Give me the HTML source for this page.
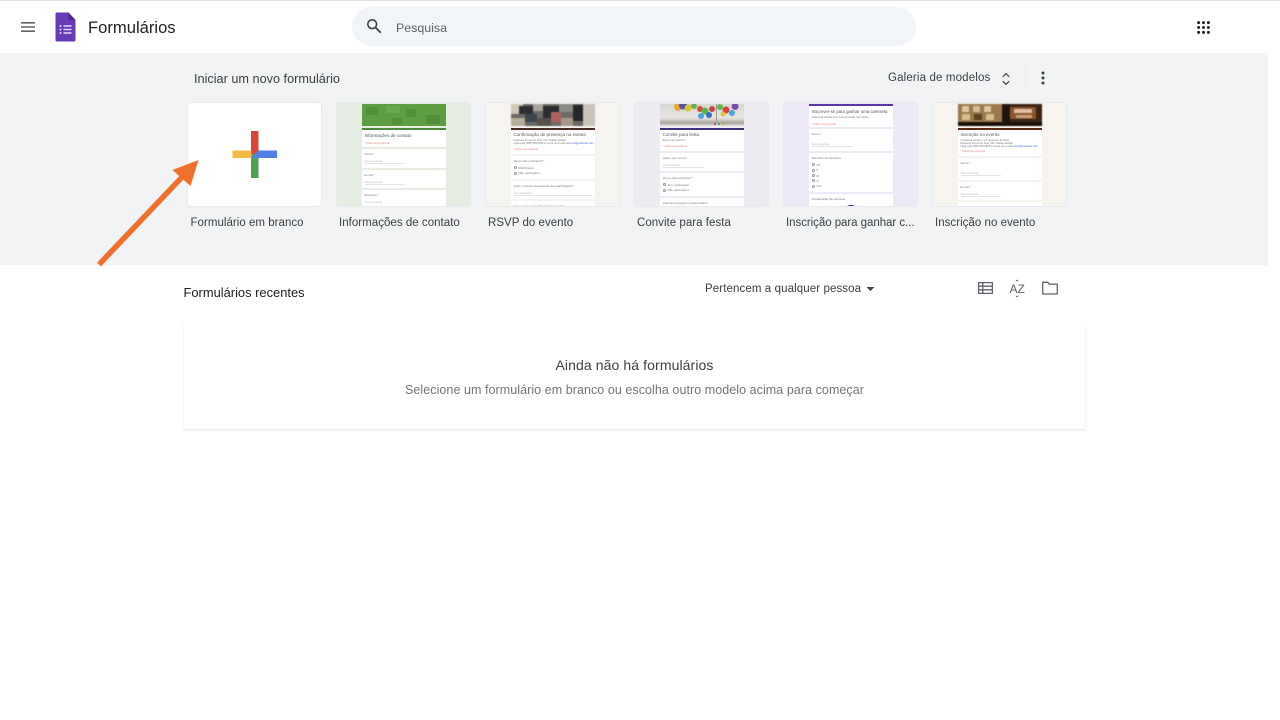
<!DOCTYPE html>
<html lang="pt"><head><meta charset="utf-8"><title>Formulários</title>
<style>
html,body{margin:0;padding:0;background:#fff;width:1280px;height:720px;overflow:hidden;font-family:"Liberation Sans",sans-serif;color:#202124}
body{filter:blur(.3px)}
div,span,svg{position:absolute;box-sizing:border-box}
.t{white-space:nowrap;line-height:16px}
.card{top:102px;width:135px;height:105px;border-radius:4px;border:1px solid #e8eaec;overflow:hidden}
.in{top:0;width:84px;left:24.5px;height:105px;filter:blur(.3px)}
.w{left:0;width:84px;background:#fff}
.x{white-space:nowrap;font-size:3px;line-height:4px;color:#777}
.h{font-size:5px;line-height:6px;color:#555;white-space:nowrap}
.r{font-size:2.5px;line-height:3px;color:#e0807c;white-space:nowrap}
.c{width:3px;height:3px;border:.4px solid #999;border-radius:50%;left:3px}
.l{left:3px;width:40px;height:.5px;background:#e4e4e4}
.lbl{top:215px;font-size:11.5px;color:#3c4043;letter-spacing:.03px}
</style></head><body>
<div style="left:0;top:0;width:1280px;height:1px;background:#dfe1e4"></div>

<svg style="left:21px;top:22px" width="14" height="10" viewBox="0 0 14 10"><path d="M0 .8h14M0 5h14M0 9.200h14" stroke="#5f6368" stroke-width="1.600" fill="none"/></svg>
<svg style="left:55px;top:12px" width="21" height="30" viewBox="0 0 21 30"><path d="M2 .5h11.500l7 7.500v20a1.500 1.500 0 0 1-1.500 1.500H2A1.500 1.500 0 0 1 .5 28V2A1.500 1.500 0 0 1 2 .5z" fill="#673ab7"/><path d="M13.500.5l7 7.500h-5.500a1.500 1.500 0 0 1-1.500-1.500z" fill="#4b2a8f"/><path d="M8.500 14h8M8.500 17.500h8M8.500 21h8" stroke="#e6dcf5" stroke-width="1.500"/><circle cx="5.500" cy="14" r="1" fill="#e6dcf5"/><circle cx="5.500" cy="17.500" r="1" fill="#e6dcf5"/><circle cx="5.500" cy="21" r="1" fill="#e6dcf5"/></svg>
<div class="t" style="left:88px;top:18px;font-size:16.600px;line-height:20px;color:#202124">Formulários</div>

<div style="left:352px;top:7px;width:564px;height:39px;border-radius:20px;background:#f1f4f8"></div>
<svg style="left:366px;top:18px" width="16" height="16" viewBox="0 0 16 16"><circle cx="6.200" cy="6.200" r="4.400" stroke="#3c4043" stroke-width="1.600" fill="none"/><path d="M9.500 9.500l5.300 5.300" stroke="#3c4043" stroke-width="1.800"/></svg>
<div class="t" style="left:396px;top:20px;font-size:12.400px;color:#5f6368">Pesquisa</div>

<svg style="left:1197px;top:21px" width="13" height="13" viewBox="0 0 13 13" fill="#202124"><circle cx="1.600" cy="1.600" r="1.500"/><circle cx="6.500" cy="1.600" r="1.500"/><circle cx="11.400" cy="1.600" r="1.500"/><circle cx="1.600" cy="6.500" r="1.500"/><circle cx="6.500" cy="6.500" r="1.500"/><circle cx="11.400" cy="6.500" r="1.500"/><circle cx="1.600" cy="11.400" r="1.500"/><circle cx="6.500" cy="11.400" r="1.500"/><circle cx="11.400" cy="11.400" r="1.500"/></svg>

<div style="left:0;top:53px;width:1268px;height:212px;background:#f1f3f4"></div>
<div class="t" style="left:194px;top:71px;font-size:12.700px;color:#3c4043">Iniciar um novo formulário</div>
<div class="t" style="left:888px;top:70px;font-size:11.500px;color:#3c4043;letter-spacing:.15px">Galeria de modelos</div>
<svg style="left:1001px;top:72px" width="10" height="14" viewBox="0 0 10 14"><path d="M1.800 4.800L5 1.600l3.200 3.200M1.800 9.200L5 12.400l3.200-3.200" stroke="#3c4043" stroke-width="1.200" fill="none"/></svg>
<div style="left:1025px;top:65px;width:1px;height:27px;background:#e8eaed"></div>
<svg style="left:1041px;top:71px" width="4" height="14" viewBox="0 0 4 14" fill="#3c4043"><circle cx="2" cy="2" r="1.500"/><circle cx="2" cy="7" r="1.500"/><circle cx="2" cy="12" r="1.500"/></svg>

<!-- card 1 -->
<div class="card" style="left:187px;background:#fff"></div>
<svg style="left:232px;top:131px" width="46" height="47" viewBox="0 0 46 47"><rect x="19" y="0" width="7.500" height="24" fill="#db4437"/><rect x="19" y="23" width="7.500" height="24" fill="#4ea14f"/><rect x="0.500" y="19.500" width="19" height="7.500" fill="#f4b942"/><path d="M19 27l7.500-7.500H45V27z" fill="#4f80e8"/></svg>

<!-- card 2 -->
<div class="card" style="left:336px;background:#e6eee3"><div class="in">
<div class="w" style="top:1px;height:22px;background:#5c9e41"></div>
<div style="left:4px;top:4px;width:12px;height:8px;background:#538f3a"></div><div style="left:24px;top:3px;width:14px;height:7px;background:#68a84f"></div><div style="left:44px;top:6px;width:10px;height:8px;background:#538f3a"></div><div style="left:64px;top:12px;width:14px;height:9px;background:#538f3a"></div><div style="left:30px;top:15px;width:10px;height:7px;background:#538f3a"></div>
<div class="w" style="top:25px;height:2px;background:#4f8a38"></div>
<div class="w" style="top:27px;height:17px"><span class="h" style="left:3px;top:3px;font-size:4.500px">Informações de contato</span><span class="r" style="left:3px;top:12px">* Indica uma pergunta</span></div>
<div class="w" style="top:46px;height:18.500px"><span class="x" style="left:3px;top:3px">Nome *</span><span class="x" style="left:3px;top:10px;color:#bbb">Sua resposta</span><span class="l" style="top:14px"></span></div>
<div class="w" style="top:67px;height:18px"><span class="x" style="left:3px;top:3px">E-mail *</span><span class="x" style="left:3px;top:10px;color:#bbb">Sua resposta</span><span class="l" style="top:14px"></span></div>
<div class="w" style="top:87px;height:18px"><span class="x" style="left:3px;top:3px">Endereço *</span><span class="x" style="left:3px;top:10px;color:#bbb">Sua resposta</span></div>
</div></div>

<!-- card 3 -->
<div class="card" style="left:485px;background:#f6f4f1"><div class="in">
<svg style="left:0;top:1px;filter:blur(.6px)" width="84" height="22" viewBox="0 0 84 22"><rect width="84" height="22" fill="#6d6a66"/><rect x="0" y="0" width="12" height="10" fill="#cfc8ba"/><rect x="8" y="2" width="14" height="8" fill="#2d2e31"/><rect x="22" y="0" width="10" height="7" fill="#a9a59c"/><rect x="32" y="2" width="16" height="12" fill="#2b2d31"/><rect x="48" y="0" width="14" height="8" fill="#8c8a86"/><rect x="62" y="1" width="10" height="16" fill="#26272a"/><rect x="72" y="0" width="12" height="22" fill="#c9c4ba"/><rect x="40" y="8" width="10" height="10" fill="#b0605c"/><rect x="14" y="10" width="12" height="8" fill="#3a4650"/><rect x="0" y="14" width="14" height="8" fill="#b8ac9a"/><rect x="26" y="14" width="14" height="8" fill="#56504a"/><rect x="50" y="14" width="12" height="8" fill="#a89888"/></svg>
<div class="w" style="top:25px;height:2px;background:#4a2a28"></div>
<div class="w" style="top:27px;height:23.500px"><span class="h" style="left:3px;top:2px;font-size:4.500px">Confirmação de presença no evento</span><span class="x" style="left:3px;top:9px;font-size:2.500px">Endereço do evento: Rua, 123, Cidade, Estado</span><span class="x" style="left:3px;top:12px;font-size:2.500px">Ligue para (555) 555-5555 ou envie um e-mail para <span style="position:static;color:#3367d6">rsvp@example.com</span></span><span class="r" style="left:3px;top:18px">* Indica uma pergunta</span></div>
<div class="w" style="top:53px;height:22.500px"><span class="x" style="left:3px;top:3px">Vai ou não participar? *</span><span class="c" style="top:10px"></span><span class="x" style="left:8px;top:9.500px">Participarei</span><span class="c" style="top:15.500px"></span><span class="x" style="left:8px;top:15px">Não participarei</span></div>
<div class="w" style="top:78px;height:17.500px"><span class="x" style="left:3px;top:3px">Qual o número de pessoas que participarão?</span><span class="x" style="left:3px;top:10px;color:#bbb">Sua resposta</span><span class="l" style="top:14px;width:78px"></span></div>
<div class="w" style="top:98px;height:8px"><span class="x" style="left:3px;top:3px">Como você ouviu falar deste evento?</span></div>
</div></div>

<!-- card 4 -->
<div class="card" style="left:634px;background:#eeebf3"><div class="in">
<div class="w" style="top:1px;height:22px;background:linear-gradient(180deg,#d8d8d4 0%,#e6e5e1 60%,#d8d6cf 70%,#a8a49c 85%,#e4e2dc 100%)"></div>
<svg style="left:0;top:1px" width="84" height="22" viewBox="0 0 84 22"><circle cx="18" cy="3" r="4" fill="#e8a838"/><circle cx="23" cy="1.500" r="4" fill="#5b4ea8"/><circle cx="28" cy="4" r="3.500" fill="#d7c530"/><circle cx="34" cy="2" r="3" fill="#6ab04c"/><circle cx="40" cy="5" r="3" fill="#d94a3a"/><circle cx="45" cy="7" r="3.500" fill="#56b74e"/><circle cx="41" cy="12" r="3" fill="#4aa3df"/><circle cx="49" cy="11" r="3" fill="#3c6fc4"/><circle cx="52" cy="5" r="3" fill="#c9463e"/><rect x="56" y="0" width="1" height="18" fill="#999"/><circle cx="60" cy="3" r="3" fill="#62b84c"/><circle cx="66" cy="6" r="3.500" fill="#d9403c"/><circle cx="72" cy="9" r="3" fill="#4aa3df"/><circle cx="75" cy="2.500" r="3.500" fill="#7a4ab0"/><circle cx="63" cy="10" r="2.500" fill="#e3c33a"/><circle cx="55" cy="20" r="1" fill="#c33"/><circle cx="59" cy="20" r="1" fill="#38a"/><circle cx="63" cy="20" r="1" fill="#ca3"/></svg>
<div class="w" style="top:25px;height:2px;background:#43307a"></div>
<div class="w" style="top:27px;height:20.500px"><span class="h" style="left:3px;top:2px;font-size:4.500px">Convite para festa</span><span class="x" style="left:3px;top:9px;font-size:2.500px">Espero que possa ir!</span><span class="r" style="left:3px;top:15px">* Indica uma pergunta</span></div>
<div class="w" style="top:50px;height:17.500px"><span class="x" style="left:3px;top:3px">Qual o seu nome?</span><span class="x" style="left:3px;top:10px;color:#bbb">Sua resposta</span><span class="l" style="top:14px"></span></div>
<div class="w" style="top:70px;height:23px"><span class="x" style="left:3px;top:3px">Vai ou não participar? *</span><span class="c" style="top:10px"></span><span class="x" style="left:8px;top:9.500px">Sim, participarei</span><span class="c" style="top:15.500px"></span><span class="x" style="left:8px;top:15px">Não participarei</span></div>
<div class="w" style="top:95px;height:11px"><span class="x" style="left:3px;top:3px">Quantas pessoas comparecerão?</span></div>
</div></div>

<!-- card 5 -->
<div class="card" style="left:783px;background:#ede9f6"><div class="in">
<div class="w" style="top:1px;height:1.500px;background:#5b35a8"></div>
<div class="w" style="top:2.500px;height:21.500px"><span class="h" style="left:3px;top:3px;font-size:4.300px">Inscrever-se para ganhar uma camiseta</span><span class="x" style="left:3px;top:10px;font-size:2.500px">Nada será postado sem sua permissão. Sem spam.</span><span class="r" style="left:3px;top:17px">* Indica uma pergunta</span></div>
<div class="w" style="top:26px;height:21.500px"><span class="x" style="left:3px;top:3px">Nome *</span><span class="x" style="left:3px;top:13px;color:#bbb">Sua resposta</span><span class="l" style="top:17px"></span></div>
<div class="w" style="top:50px;height:39px"><span class="x" style="left:3px;top:3px">Tamanho da camiseta</span><span class="c" style="top:10px"></span><span class="c" style="top:15.500px"></span><span class="c" style="top:21px"></span><span class="c" style="top:26px"></span><span class="c" style="top:31.500px"></span><span class="x" style="left:8px;top:9.500px">PP</span><span class="x" style="left:8px;top:15px">P</span><span class="x" style="left:8px;top:20.500px">M</span><span class="x" style="left:8px;top:25.500px">G</span><span class="x" style="left:8px;top:31px">GG</span></div>
<div class="w" style="top:91px;height:15px"><span class="x" style="left:3px;top:3px">Visualização da camiseta</span><span style="left:34px;top:11px;width:16px;height:16px;border-radius:50%;background:#b39a82;border:2px solid #2b3f70"></span></div>
</div></div>

<!-- card 6 -->
<div class="card" style="left:932px;background:#f7f3ef"><div class="in">
<svg style="left:0;top:1px;filter:blur(.5px)" width="84" height="22" viewBox="0 0 84 22"><rect width="84" height="22" fill="#3a2412"/><rect x="0" y="0" width="44" height="18" fill="#9a7a4c"/><rect x="4" y="2" width="7" height="6" fill="#e0c9a0"/><rect x="15" y="2" width="7" height="6" fill="#d6bc90"/><rect x="26" y="2" width="7" height="6" fill="#e0c9a0"/><rect x="4" y="10" width="8" height="6" fill="#d8be92"/><rect x="16" y="10" width="8" height="6" fill="#5a4024"/><rect x="28" y="10" width="8" height="6" fill="#d8be92"/><rect x="44" y="0" width="8" height="18" fill="#1f140c"/><rect x="52" y="3" width="26" height="12" fill="#8a5430"/><rect x="56" y="5" width="18" height="4" fill="#e0c0a0"/><rect x="58" y="11" width="16" height="3" fill="#caa07c"/><rect x="0" y="18" width="84" height="4" fill="#1c120a"/></svg>
<div class="w" style="top:25px;height:2px;background:#5a2a10"></div>
<div class="w" style="top:27px;height:26px"><span class="h" style="left:3px;top:2px;font-size:4.500px">Inscrição no evento</span><span class="x" style="left:3px;top:9px;font-size:2.500px">Horário do evento: 4 e 5 de janeiro de 2024</span><span class="x" style="left:3px;top:12px;font-size:2.500px">Endereço do evento: Rua, 123, Cidade, Estado</span><span class="x" style="left:3px;top:15px;font-size:2.500px">Ligue para (555) 555-5555 ou envie um e-mail <span style="position:static;color:#3367d6">evento@example.com</span></span><span class="r" style="left:3px;top:20px">* Indica uma pergunta</span></div>
<div class="w" style="top:55px;height:21.500px"><span class="x" style="left:3px;top:3px">Nome *</span><span class="x" style="left:3px;top:13px;color:#bbb">Sua resposta</span><span class="l" style="top:17px"></span></div>
<div class="w" style="top:79px;height:18px"><span class="x" style="left:3px;top:3px">E-mail *</span><span class="x" style="left:3px;top:10px;color:#bbb">Sua resposta</span><span class="l" style="top:14px"></span></div>
<div class="w" style="top:99px;height:7px"><span class="x" style="left:3px;top:3px">Nome da empresa</span></div>
</div></div>

<div class="t lbl" style="left:190.500px">Formulário em branco</div>
<div class="t lbl" style="left:339px">Informações de contato</div>
<div class="t lbl" style="left:488px">RSVP do evento</div>
<div class="t lbl" style="left:637px">Convite para festa</div>
<div class="t lbl" style="left:786px;letter-spacing:-.05px">Inscrição para ganhar c...</div>
<div class="t lbl" style="left:935px">Inscrição no evento</div>

<svg style="left:0;top:0" width="300" height="280" viewBox="0 0 300 280"><path d="M99 264.500L184 175" stroke="#ef6f2b" stroke-width="5.500" fill="none"/><path d="M198.500 160L172.500 170L190.500 186z" fill="#ef6f2b"/></svg>

<div class="t" style="left:183.500px;top:285px;font-size:12.900px;color:#202124">Formulários recentes</div>
<div class="t" style="left:705px;top:281px;font-size:11.500px;color:#3c4043;letter-spacing:.1px">Pertencem a qualquer pessoa</div>
<svg style="left:866px;top:287px" width="9" height="5" viewBox="0 0 9 5"><path d="M.5 0h8L4.500 4z" fill="#3c4043"/></svg>
<svg style="left:978px;top:282px" width="15" height="12" viewBox="0 0 15 12"><path d="M.6.600h13.800v10.800H.6zM.6 4.200h13.800M.6 7.800h13.800M4.800.6v10.800" stroke="#5f6368" stroke-width="1.300" fill="none"/></svg>
<div style="left:1009.500px;top:281.500px;font-size:12px;line-height:14px;color:#5f6368">A</div>
<div style="left:1017.500px;top:281.500px;font-size:12px;line-height:14px;color:#5f6368">Z</div>
<svg style="left:1014px;top:279px" width="6" height="20" viewBox="0 0 6 20" fill="#5f6368"><path d="M3 0.500l1.600 1.600H1.400zM3 18.500l1.600-1.600H1.400z"/></svg>
<svg style="left:1042px;top:281px" width="16" height="14" viewBox="0 0 16 14"><path d="M.7 1.300h5l1.600 1.800h8v9.900H.7z" stroke="#5f6368" stroke-width="1.300" fill="none" stroke-linejoin="round"/></svg>

<div style="left:184px;top:323px;width:901px;height:106px;background:#fff;border-radius:2px;box-shadow:0 1px 2px rgba(60,64,67,.12),0 0 1px rgba(60,64,67,.06)"></div>
<div class="t" style="left:184px;width:901px;text-align:center;top:357px;font-size:14px;color:#3c4043;letter-spacing:.1px">Ainda não há formulários</div>
<div class="t" style="left:184px;width:901px;text-align:center;top:382px;font-size:12.500px;color:#70757a;letter-spacing:.06px">Selecione um formulário em branco ou escolha outro modelo acima para começar</div>
</body></html>
